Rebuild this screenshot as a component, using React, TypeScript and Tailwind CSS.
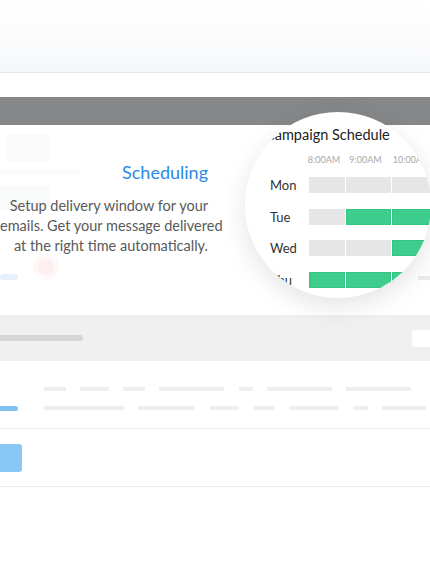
const days = [
  { label: 'Mon', cells: [0, 0, 0, 0] },
  { label: 'Tue', cells: [0, 1, 1, 1] },
  { label: 'Wed', cells: [0, 0, 1, 1] },
  { label: 'Thu', cells: [1, 1, 1, 1] },
];

const times = ['8:00AM', '9:00AM', '10:00AM', '11:00AM'];

// placeholder dashes in the list row (gap before each, width)
const dashRow1 = [
  [44, 22], [14, 29], [14, 22], [14, 65], [15, 14], [14, 65], [14, 65],
];
const dashRow2 = [
  [26, 80], [14, 57], [15, 29], [14, 22], [14, 50], [14, 15], [14, 44],
];

function ScheduleLens() {
  return (
    <div className="absolute left-[245px] top-[112px] w-[186px] h-[186px] rounded-full bg-white overflow-hidden shadow-[0_8px_26px_rgba(0,0,0,0.11)]">
      <div className="pt-[13px] pl-[20px] w-[260px]">
        <div className="text-[14.5px] leading-[20px] text-[#222] whitespace-nowrap">Campaign Schedule</div>
      </div>

      {/* time header */}
      <div className="mt-[9px] pl-[61px] grid grid-cols-[36px_45px_45px_45px] gap-x-px w-[260px]">
        {times.map((t) => (
          <div key={t} className="text-center text-[9px] leading-[12px] text-[#a8a8a8] whitespace-nowrap">
            {t}
          </div>
        ))}
      </div>

      <div className="mt-[11px] flex flex-col gap-[15.5px] w-[260px]">
        {days.map((d) => (
          <div key={d.label} className="flex items-center pl-[25px]">
            <div className="w-[39px] text-[13px] leading-[16px] text-[#333]">{d.label}</div>
            <div className="grid grid-cols-[36px_45px_45px_45px] gap-x-px">
              {d.cells.map((on, i) => (
                <div
                  key={i}
                  className={
                    on
                      ? 'h-4 bg-[#3ecd8c] shadow-[inset_0_0_0_1px_#33c581]'
                      : 'h-4 bg-[#e6e6e6]'
                  }
                />
              ))}
            </div>
          </div>
        ))}
      </div>
    </div>
  );
}

export default function App() {
  return (
    <div className="relative w-[430px] h-[570px] overflow-hidden bg-white font-['Lato','Open_Sans',sans-serif]">
      {/* top header strip */}
      <div className="h-[73px] bg-gradient-to-b from-white via-[#fcfcfd] to-[#f5f7f9] border-b border-[#e3e8ed]" />
      <div className="h-[24px]" />

      {/* window title bar */}
      <div className="h-[28px] bg-[#858789]" />

      {/* feature panel */}
      <div className="h-[190px] grid">
        {/* faded ghost content */}
        <div className="[grid-area:1/1] flex flex-col">
          <div className="ml-[7px] mt-[10px] w-[43px] h-[26px] bg-[#fafafa]" />
          <div className="mt-[9px] w-[80px] h-[5px] bg-[#fbfbfc]" />
          <div className="mt-[10px] w-[50px] h-[25px] bg-[#f9fafa]" />
          <div className="mt-[44px] flex items-end">
            <div className="w-[18px] h-[6px] rounded-full bg-[#e6f1fb]" />
            <div className="ml-[15px] w-[26px] h-[26px] rounded-full bg-[#fff8f9] flex items-center justify-center">
              <div className="w-[16px] h-[16px] rounded-full bg-[#fdeef0]" />
            </div>
          </div>
        </div>
        <div className="[grid-area:1/1] flex justify-end items-start pt-[151px]">
          <div className="w-[12px] h-[4px] bg-[#ececec]" />
        </div>

        {/* copy */}
        <div className="[grid-area:1/1] w-[208px] text-right pt-[35px]">
          <div className="text-[18px] leading-[24px] text-[#2a8ae6]">Scheduling</div>
          <p className="mt-[12px] text-[14.5px] leading-[20px] text-[#595959] whitespace-nowrap">
            Setup delivery window for your
            <br />
            emails. Get your message delivered
            <br />
            at the right time automatically.
          </p>
        </div>
      </div>

      {/* toolbar band */}
      <div className="h-[46px] bg-[#f0f0f0] flex items-center justify-between">
        <div className="w-[83px] h-[6px] rounded-r-full bg-[#d6d6d6]" />
        <div className="w-[18px] h-[17px] rounded-l-[3px] bg-white" />
      </div>

      {/* list row */}
      <div className="h-[68px] border-b border-[#ececec] pt-[26px]">
        <div className="flex">
          {dashRow1.map(([gap, w], i) => (
            <div key={i} style={{ marginLeft: gap, width: w }} className="h-[4px] bg-[#eeeeee]" />
          ))}
        </div>
        <div className="mt-[15px] flex">
          <div className="w-[18px] h-[5px] rounded-r-full bg-[#7fc0f1]" />
          {dashRow2.map(([gap, w], i) => (
            <div key={i} style={{ marginLeft: gap, width: w }} className="h-[4px] bg-[#eeeeee]" />
          ))}
        </div>
      </div>

      {/* action row */}
      <div className="h-[58px] border-b border-[#ececec] pt-[15px]">
        <div className="w-[22px] h-[28px] rounded-r-[3px] bg-[#88c6f3]" />
      </div>

      <ScheduleLens />
    </div>
  );
}
